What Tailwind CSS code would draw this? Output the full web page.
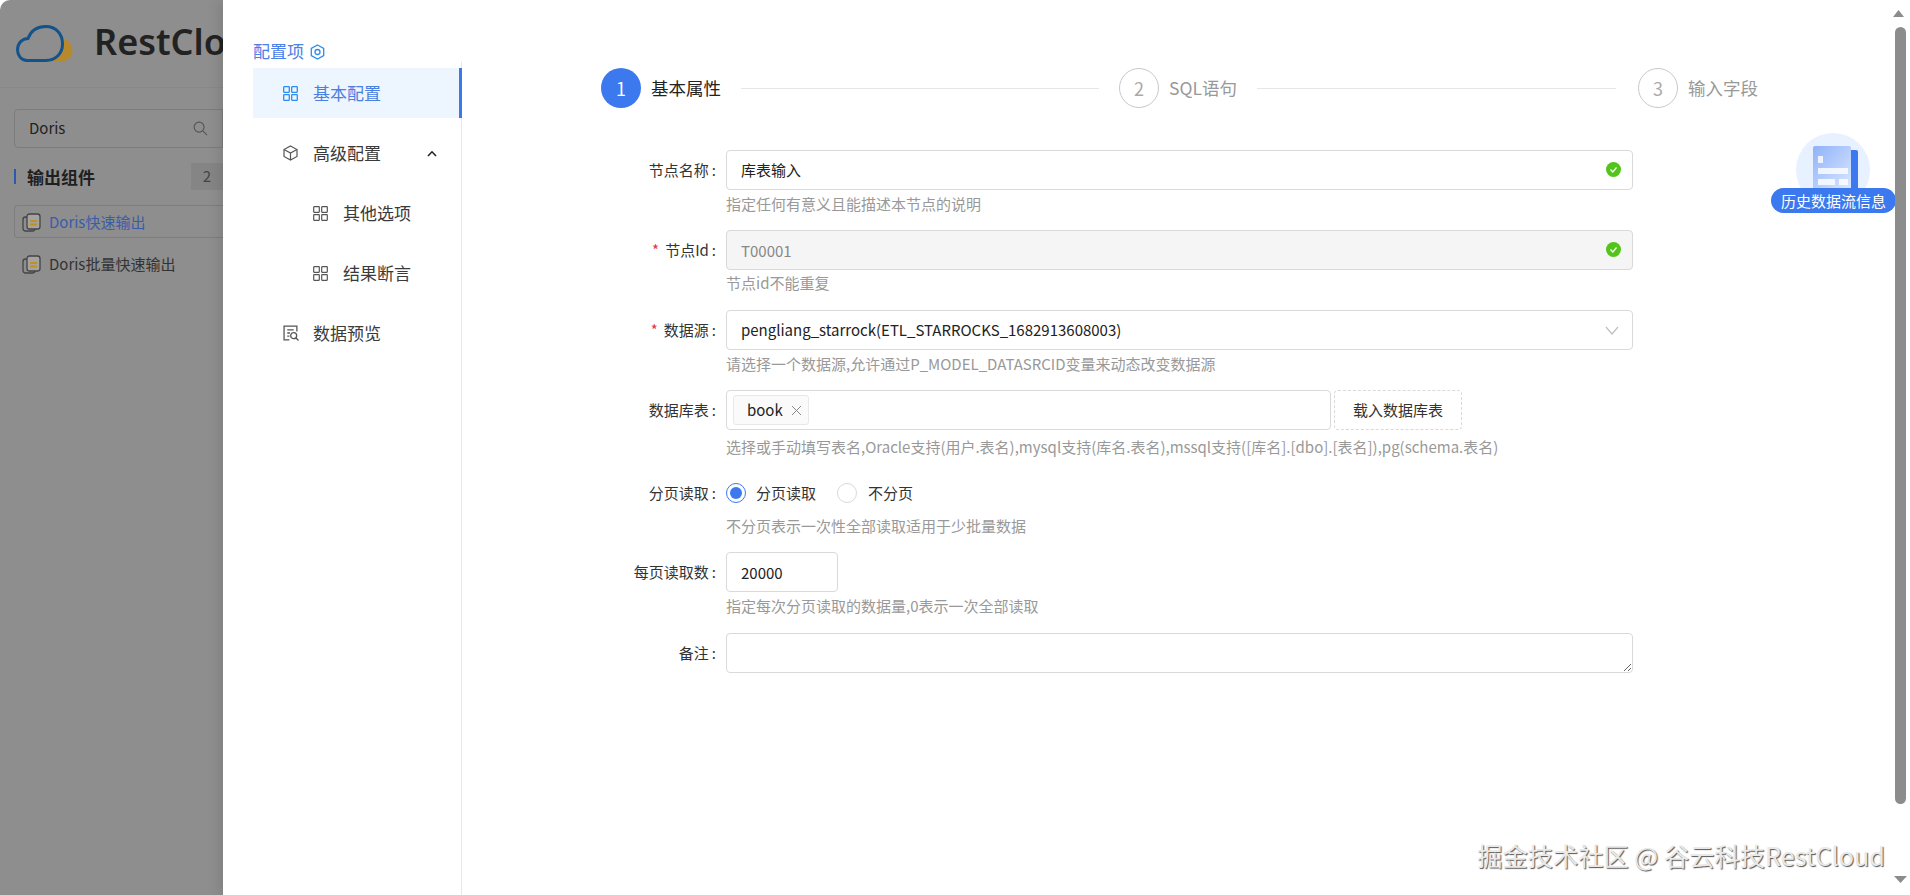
<!DOCTYPE html>
<html lang="zh-CN">
<head>
  <meta charset="UTF-8">
  <title>RestCloud 配置项</title>
  <script src="https://cdn.jsdelivr.net/npm/@tailwindcss/browser@4"></script>
</head>
<body class="h-screen w-screen overflow-hidden bg-white flex font-['Noto_Sans_CJK_SC','Noto_Sans',sans-serif] text-[#333]">

  <!-- dimmed page behind the drawer -->
  <aside class="w-[223px] shrink-0 h-full bg-[#8e8e8e] rounded-tl-[10px] overflow-hidden">
    <div class="h-[88px] flex items-center border-b border-[#888] relative">
      <svg class="absolute left-0 top-0" width="80" height="70" viewBox="0 0 80 70">
        <path d="M62 38C69 40 72.500 45 72.500 51C72.500 57 67 61.500 61 61.500H47C58 60 65 50 62 38Z" fill="#b68a2c"/>
        <path d="M27 60.500C21 60.500 17.500 55 17.500 50C17.500 43.500 22 38.500 28 38.500C31 30.500 38 26.500 46 26.500C56 26.500 62.500 34 62.500 44C62.500 54 55 60.500 46 60.500Z" fill="none" stroke="#14528a" stroke-width="3"/>
      </svg>
      <span class="ml-[94px] text-[36px] leading-none font-semibold text-[#222] font-['Noto_Sans',sans-serif] mb-[4px] whitespace-nowrap">RestCloud</span>
    </div>
    <div class="pl-[14px] pt-[21px]">
      <div class="h-[39px] border border-[#7c7c7c] rounded-l-[4px] flex items-center justify-between pl-[14px] pr-[14px]">
        <span class="text-[15px] text-[#222]">Doris</span>
        <svg width="15" height="15" viewBox="0 0 16 16" fill="none" stroke="#555" stroke-width="1.200"><circle cx="6.500" cy="6.500" r="5.300"/><path d="M10.500 10.500L15 15"/></svg>
      </div>
      <div class="mt-[15px] flex items-center h-[27px]">
        <span class="w-[2px] h-[15px] bg-[#2c58b0]"></span>
        <span class="ml-[11px] text-[17px] font-bold text-[#1f1f1f]">输出组件</span>
        <span class="ml-auto w-[32px] h-[27px] bg-[#858585] text-[#444] text-[15px] flex items-center justify-center">2</span>
      </div>
      <div class="mt-[15px] h-[33px] pt-px border border-[#7e7e7e] border-r-0 rounded-l-[4px] flex items-center pl-[7px] gap-[8px] text-[15px] text-[#3b5cab] whitespace-nowrap">
        <svg width="19" height="19" viewBox="0 0 19 19" fill="none" stroke="#444" stroke-width="1.300"><rect x="1" y="4" width="12" height="14" rx="2.500"/><rect x="5" y="1" width="13" height="15" rx="2.500" fill="#a3a3a3"/><path d="M8 8h7M8 11.500h7" stroke="#c09020" stroke-width="2"/></svg>
        Doris快速输出
      </div>
      <div class="mt-[10px] h-[33px] flex items-center pl-[8px] gap-[8px] text-[15px] text-[#333] whitespace-nowrap">
        <svg width="19" height="19" viewBox="0 0 19 19" fill="none" stroke="#444" stroke-width="1.300"><rect x="1" y="4" width="12" height="14" rx="2.500"/><rect x="5" y="1" width="13" height="15" rx="2.500" fill="#a3a3a3"/><path d="M8 8h7M8 11.500h7" stroke="#c09020" stroke-width="2"/></svg>
        Doris批量快速输出
      </div>
    </div>
  </aside>

  <!-- drawer -->
  <div class="flex-1 h-full flex bg-white relative shadow-[-4px_0_12px_rgba(0,0,0,0.1)]">
    <nav class="w-[239px] shrink-0 h-full pl-[30px] pt-[38px] flex flex-col">
      <div class="h-[24px] flex items-center gap-[6px] text-[17px] text-[#4a80e8] leading-none">
        配置项
        <svg class="mt-[3px]" width="15" height="16" viewBox="0 0 15 16" fill="none" stroke="#2d8cf0" stroke-width="1.300"><path d="M7.500 1L13.700 4.500V11.500L7.500 15L1.300 11.500V4.500Z"/><circle cx="7.500" cy="8" r="2.500"/></svg>
      </div>
      <ul class="flex-1 border-r border-[#e8e8e8] text-[17px] text-[#3a3a3a]">
        <li class="mt-[6px] h-[50px] flex items-center pl-[30px] gap-[15px] bg-[#edf5ff] text-[#4a80e0] border-r-[3px] border-[#3c78e8] mr-[-1px]">
          <svg width="15" height="15" viewBox="0 0 15 15" fill="none" stroke="#2d8cf0" stroke-width="1.300"><rect x="0.700" y="0.700" width="5.600" height="5.600" rx="0.500"/><rect x="8.700" y="0.700" width="5.600" height="5.600" rx="0.500"/><rect x="0.700" y="8.700" width="5.600" height="5.600" rx="0.500"/><rect x="8.700" y="8.700" width="5.600" height="5.600" rx="0.500"/></svg>
          基本配置
        </li>
        <li class="mt-[10px] h-[50px] flex items-center pl-[30px] gap-[15px]">
          <svg width="15" height="16" viewBox="0 0 15 16" fill="none" stroke="#555" stroke-width="1.200"><path d="M7.500 1L14 4.500V11.500L7.500 15L1 11.500V4.500Z"/><path d="M1 4.500L7.500 8L14 4.500M7.500 8V15"/></svg>
          高级配置
          <svg class="ml-[31px]" width="10" height="7" viewBox="0 0 10 7" fill="none" stroke="#222" stroke-width="1.600"><path d="M1 6L5 1.800L9 6"/></svg>
        </li>
        <li class="mt-[10px] h-[50px] flex items-center pl-[60px] gap-[15px]">
          <svg width="15" height="15" viewBox="0 0 15 15" fill="none" stroke="#555" stroke-width="1.200"><rect x="0.700" y="0.700" width="5.600" height="5.600" rx="0.500"/><rect x="8.700" y="0.700" width="5.600" height="5.600" rx="0.500"/><rect x="0.700" y="8.700" width="5.600" height="5.600" rx="0.500"/><rect x="8.700" y="8.700" width="5.600" height="5.600" rx="0.500"/></svg>
          其他选项
        </li>
        <li class="mt-[10px] h-[50px] flex items-center pl-[60px] gap-[15px]">
          <svg width="15" height="15" viewBox="0 0 15 15" fill="none" stroke="#555" stroke-width="1.200"><rect x="0.700" y="0.700" width="5.600" height="5.600" rx="0.500"/><rect x="8.700" y="0.700" width="5.600" height="5.600" rx="0.500"/><rect x="0.700" y="8.700" width="5.600" height="5.600" rx="0.500"/><rect x="8.700" y="8.700" width="5.600" height="5.600" rx="0.500"/></svg>
          结果断言
        </li>
        <li class="mt-[10px] h-[50px] flex items-center pl-[30px] gap-[14px]">
          <svg width="16" height="16" viewBox="0 0 15 15" fill="none" stroke="#555" stroke-width="1.200"><path d="M6 14H1V1H13V6"/><path d="M4 4.500H10M4 7.500H6.500M4 10.500H6"/><circle cx="10" cy="10" r="2.800"/><path d="M12 12L14.500 14.500"/></svg>
          数据预览
        </li>
      </ul>
    </nav>

    <main class="flex-1 pt-[68px]">
      <!-- steps -->
      <div class="ml-[139px] flex items-center h-[40px]">
        <span class="w-[40px] h-[40px] rounded-full bg-[#3c78ee] text-white text-[18px] flex items-center justify-center">1</span>
        <span class="ml-[10px] text-[17.500px] text-[#222]">基本属性</span>
        <span class="ml-[20px] w-[358px] h-px bg-[#e6e6e6]"></span>
        <span class="ml-[20px] w-[40px] h-[40px] rounded-full border border-[#c9c9c9] text-[#aaa] text-[18px] flex items-center justify-center">2</span>
        <span class="ml-[10px] text-[17.500px] text-[#999]">SQL语句</span>
        <span class="ml-[20px] w-[359px] h-px bg-[#e6e6e6]"></span>
        <span class="ml-[22px] w-[40px] h-[40px] rounded-full border border-[#c9c9c9] text-[#aaa] text-[18px] flex items-center justify-center">3</span>
        <span class="ml-[10px] text-[17.500px] text-[#999]">输入字段</span>
      </div>

      <!-- form -->
      <form class="mt-[42px] text-[15px]">
        <div class="flex h-[80px]">
          <label class="w-[264px] pr-[10px] h-[40px] flex items-center justify-end text-[#333]">节点名称<span class="ml-[3px]">:</span></label>
          <div class="w-[907px]">
            <div class="relative">
              <input value="库表输入" class="w-full h-[40px] pb-[2px] border border-[#d9d9d9] rounded-[4px] px-[14px] text-[#222]">
              <svg class="absolute right-[12px] top-[12px]" width="15" height="15" viewBox="0 0 15 15"><circle cx="7.500" cy="7.500" r="7.500" fill="#52c41a"/><path d="M4.500 7.500L6.800 10L10.500 5.500" fill="none" stroke="#fff" stroke-width="1.200"/></svg>
            </div>
            <p class="mt-[4px] leading-[20px] text-[#999]">指定任何有意义且能描述本节点的说明</p>
          </div>
        </div>

        <div class="flex h-[80px]">
          <label class="w-[264px] pr-[10px] h-[40px] flex items-center justify-end text-[#333]"><span class="text-[#e0334a] mr-[6px]">*</span>节点Id<span class="ml-[3px]">:</span></label>
          <div class="w-[907px]">
            <div class="relative">
              <input disabled value="T00001" class="w-full h-[40px] border border-[#d9d9d9] rounded-[4px] px-[14px] bg-[#f5f5f5] text-[#888]">
              <svg class="absolute right-[12px] top-[12px]" width="15" height="15" viewBox="0 0 15 15"><circle cx="7.500" cy="7.500" r="7.500" fill="#52c41a"/><path d="M4.500 7.500L6.800 10L10.500 5.500" fill="none" stroke="#fff" stroke-width="1.200"/></svg>
            </div>
            <p class="mt-[3px] leading-[20px] text-[#999]">节点id不能重复</p>
          </div>
        </div>

        <div class="flex h-[80px]">
          <label class="w-[264px] pr-[10px] h-[40px] flex items-center justify-end text-[#333]"><span class="text-[#e0334a] mr-[6px]">*</span>数据源<span class="ml-[3px]">:</span></label>
          <div class="w-[907px]">
            <div class="h-[40px] border border-[#d9d9d9] rounded-[4px] px-[14px] flex items-center justify-between text-[#222]">
              pengliang_starrock(ETL_STARROCKS_1682913608003)
              <svg class="mr-[-1px]" width="14" height="9" viewBox="0 0 14 9" fill="none" stroke="#bfbfbf" stroke-width="1.200"><path d="M1 1L7 8L13 1"/></svg>
            </div>
            <p class="mt-[4px] leading-[20px] text-[#999]">请选择一个数据源,允许通过P_MODEL_DATASRCID变量来动态改变数据源</p>
          </div>
        </div>

        <div class="flex h-[83px]">
          <label class="w-[264px] pr-[10px] h-[40px] flex items-center justify-end text-[#333]">数据库表<span class="ml-[3px]">:</span></label>
          <div class="w-[907px]">
            <div class="flex items-center gap-[3px]">
              <div class="w-[605px] h-[40px] border border-[#d9d9d9] rounded-[4px] pl-[6px] flex items-center">
                <span class="h-[30px] w-[76px] bg-[#fafafa] border border-[#e8e8e8] rounded-[3px] pl-[13px] flex items-center gap-[8px] text-[#222]">
                  book
                  <svg width="11" height="11" viewBox="0 0 11 11" stroke="#888" stroke-width="1"><path d="M1 1L10 10M10 1L1 10"/></svg>
                </span>
              </div>
              <button type="button" class="w-[128px] h-[40px] border border-dashed border-[#d9d9d9] rounded-[4px] text-[#333]">载入数据库表</button>
            </div>
            <p class="mt-[7px] leading-[20px] text-[#999] whitespace-nowrap">选择或手动填写表名,Oracle支持(用户.表名),mysql支持(库名.表名),mssql支持([库名].[dbo].[表名]),pg(schema.表名)</p>
          </div>
        </div>

        <div class="flex h-[79px]">
          <label class="w-[264px] pr-[10px] h-[40px] flex items-center justify-end text-[#333]">分页读取<span class="ml-[3px]">:</span></label>
          <div class="w-[907px]">
            <div class="h-[40px] flex items-center text-[#333]">
              <span class="w-[20px] h-[20px] rounded-full border border-[#3c78ee] flex items-center justify-center"><span class="w-[12px] h-[12px] rounded-full bg-[#3c78ee]"></span></span>
              <span class="ml-[10px]">分页读取</span>
              <span class="ml-[21px] w-[20px] h-[20px] rounded-full border border-[#d9d9d9]"></span>
              <span class="ml-[11px]">不分页</span>
            </div>
            <p class="mt-[3px] leading-[20px] text-[#999]">不分页表示一次性全部读取适用于少批量数据</p>
          </div>
        </div>

        <div class="flex h-[81px]">
          <label class="w-[264px] pr-[10px] h-[40px] flex items-center justify-end text-[#333]">每页读取数<span class="ml-[3px]">:</span></label>
          <div class="w-[907px]">
            <input value="20000" class="block w-[112px] h-[40px] border border-[#d9d9d9] rounded-[4px] px-[14px] text-[#222]">
            <p class="mt-[4px] leading-[20px] text-[#999]">指定每次分页读取的数据量,0表示一次全部读取</p>
          </div>
        </div>

        <div class="flex">
          <label class="w-[264px] pr-[10px] h-[40px] flex items-center justify-end text-[#333]">备注<span class="ml-[3px]">:</span></label>
          <textarea class="block w-[907px] h-[40px] border border-[#d9d9d9] rounded-[4px] px-[14px]"></textarea>
        </div>
      </form>
    </main>

    <!-- history flow badge -->
    <div class="absolute left-[1548px] top-[133px] w-[125px] h-[80px]">
      <div class="absolute left-[25px] top-0 w-[74px] h-[74px] rounded-full bg-[#e8f1ff]"></div>
      <div class="absolute left-[42px] top-[13px] w-[38px] h-[44px] rounded-t-[2px] bg-gradient-to-br from-[#8fb2f8] to-[#dbe7ff]">
        <span class="absolute left-[5px] top-[10px] w-[5px] h-[7px] bg-white/80"></span>
        <span class="absolute left-[5px] top-[22px] w-[30px] h-[6px] bg-white/80"></span>
        <span class="absolute left-[5px] top-[33px] w-[17px] h-[6px] bg-white/80"></span>
        <span class="absolute left-[26px] top-[33px] w-[9px] h-[6px] bg-white/80"></span>
      </div>
      <div class="absolute left-[80px] top-[17px] w-[7px] h-[40px] bg-[#3c78ee] rounded-tr-[2px]"></div>
      <div class="absolute left-0 top-[55px] w-[125px] h-[25px] rounded-full bg-[#3c78ee] text-white text-[15px] leading-[25px] text-center whitespace-nowrap">历史数据流信息</div>
    </div>

    <!-- scrollbar -->
    <svg class="absolute right-[6px] top-[10px]" width="11" height="7" viewBox="0 0 11 7"><path d="M0 7L5.500 0L11 7Z" fill="#8c8c8c"/></svg>
    <div class="absolute right-[4px] top-[27px] w-[11px] h-[777px] rounded-full bg-[#8c8c8c]"></div>
    <svg class="absolute right-[3px] top-[876px]" width="13" height="7" viewBox="0 0 13 7"><path d="M0 0L6.500 7L13 0Z" fill="#8c8c8c"/></svg>

    <!-- watermark -->
    <div class="absolute right-[25px] top-[837px] text-[25.250px] leading-[36px] text-[#e9e9e9] whitespace-nowrap [text-shadow:1px_1px_1px_#555]">掘金技术社区 @ 谷云科技RestCloud</div>
  </div>
</body>
</html>
